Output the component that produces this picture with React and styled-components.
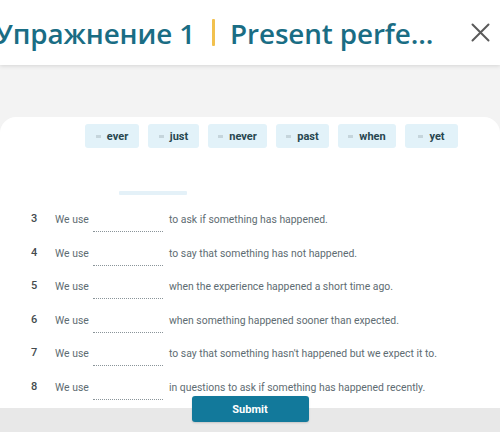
import React from "react";
import styled, { createGlobalStyle } from "styled-components";

const Global = createGlobalStyle`
  html, body { margin: 0; padding: 0; }
  body {
    width: 500px; height: 432px; overflow: hidden;
    background: #e9e9e9;
    font-family: Roboto, "Liberation Sans", sans-serif;
  }
`;

const Page = styled.div`
  display: flex;
  flex-direction: column;
  width: 500px;
  height: 432px;
  background: linear-gradient(#f3f3f3 0, #f3f3f3 408px, #e8e8e8 408px);
`;

const Header = styled.header`
  height: 65px;
  flex: none;
  background: #fff;
  box-shadow: 0 1px 4px rgba(0, 0, 0, 0.12);
  display: flex;
  align-items: center;
  position: relative;
  z-index: 1;
`;

const Title = styled.h1`
  margin: 0 0 0 -5px;
  font-family: "Open Sans", sans-serif;
  font-weight: 600;
  font-size: 27.8px;
  color: #1a6d84;
  display: flex;
  align-items: center;
  white-space: nowrap;
  letter-spacing: -0.1px;
`;

const Divider = styled.span`
  display: inline-block;
  width: 3px;
  height: 27px;
  background: #f2c14e;
  margin: 0 15px 0 17px;
  border-radius: 1px;
`;

const Close = styled.button`
  margin-left: auto;
  margin-right: 9px;
  border: 0;
  background: none;
  padding: 0;
  width: 22px;
  height: 22px;
  display: flex;
  align-items: center;
  justify-content: center;
`;

const Card = styled.main`
  margin-top: 52px;
  height: 291px;
  flex: none;
  background: #fff;
  border-radius: 16px 16px 0 0;
  padding-top: 7px;
  box-sizing: border-box;
`;

const Chips = styled.div`
  display: flex;
  gap: 9px;
  padding-left: 85px;
`;

const Chip = styled.div`
  width: ${(p) => p.$w}px;
  height: 24px;
  box-sizing: border-box;
  background: #e2f2f9;
  border-radius: 3px;
  display: flex;
  align-items: center;
  justify-content: center;
  gap: 6px;
  font-size: 11px;
  font-weight: 700;
  color: #27464f;
`;

const Dash = styled.span`
  width: 5px;
  height: 3px;
  background: #c5d5dc;
`;

const Bar = styled.div`
  margin: 43px 0 12px 119px;
  width: 68px;
  height: 4px;
  background: #e4f1f8;
  border-radius: 1px;
`;

const Rows = styled.div`
  display: flex;
  flex-direction: column;
`;

const Row = styled.div`
  height: 33.6px;
  box-sizing: border-box;
  padding: 2px 0 0 31px;
  display: flex;
  align-items: flex-start;
  font-size: 10.4px;
  line-height: 22px;
  color: #5e6c72;
`;

const Num = styled.span`
  width: 24px;
  font-size: 11px;
  font-weight: 500;
  color: #444b4e;
  line-height: 20px;
`;

const Lead = styled.span`
  width: 38px;
`;

const Blank = styled.span`
  width: 70px;
  height: 22px;
  border-bottom: 1px dotted #8a9499;
  margin-right: 6px;
`;

const Sentence = styled.span``;

const Submit = styled.button`
  align-self: center;
  margin-top: -12px;
  width: 117px;
  height: 26px;
  border: 0;
  border-radius: 3px;
  background: #12799b;
  color: #fff;
  font-family: Roboto, sans-serif;
  font-weight: 700;
  font-size: 11px;
  box-shadow: 0 1px 2px rgba(0, 0, 0, 0.15);
  position: relative;
`;

const chips = [
  ["ever", 54],
  ["just", 51],
  ["never", 59],
  ["past", 53],
  ["when", 58],
  ["yet", 53],
];

const rows = [
  [3, "to ask if something has happened."],
  [4, "to say that something has not happened."],
  [5, "when the experience happened a short time ago."],
  [6, "when something happened sooner than expected."],
  [7, "to say that something hasn't happened but we expect it to."],
  [8, "in questions to ask if something has happened recently."],
];

export default function App() {
  return (
    <>
      <Global />
      <Page>
        <Header>
          <Title>
            Упражнение 1<Divider />Present perfe...
          </Title>
          <Close aria-label="close">
            <svg width="19" height="19" viewBox="0 0 19 19">
              <path d="M1.5 1.5 L17.5 17.5 M17.5 1.5 L1.5 17.5" stroke="#5a5a5a" strokeWidth="2" strokeLinecap="round" />
            </svg>
          </Close>
        </Header>
        <Card>
          <Chips>
            {chips.map(([t, w]) => (
              <Chip key={t} $w={w}>
                <Dash />
                {t}
              </Chip>
            ))}
          </Chips>
          <Bar />
          <Rows>
            {rows.map(([n, s]) => (
              <Row key={n}>
                <Num>{n}</Num>
                <Lead>We use</Lead>
                <Blank />
                <Sentence>{s}</Sentence>
              </Row>
            ))}
          </Rows>
        </Card>
        <Submit>Submit</Submit>
      </Page>
    </>
  );
}
